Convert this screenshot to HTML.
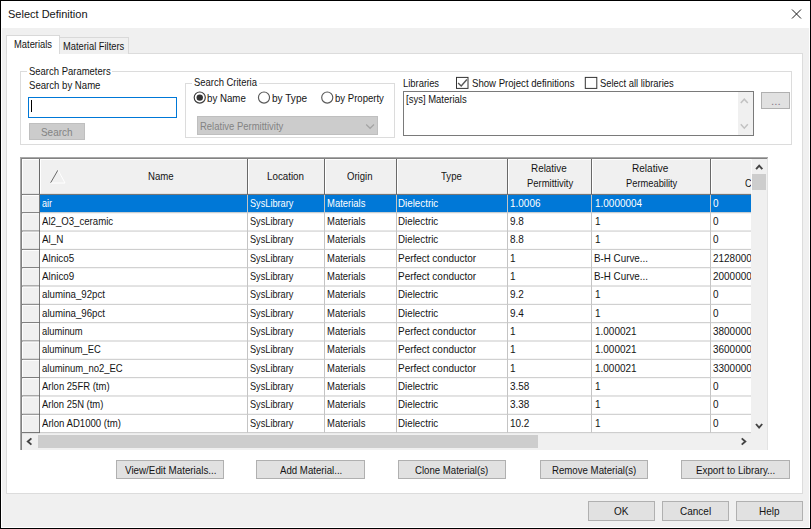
<!DOCTYPE html>
<html><head><meta charset="utf-8"><title>Select Definition</title>
<style>
html,body{margin:0;padding:0;background:#f0f0f0;}
body{width:811px;height:529px;position:relative;overflow:hidden;font-family:'Liberation Sans',sans-serif;font-size:11px;}
.b{position:absolute;box-sizing:border-box;}
.t{position:absolute;white-space:pre;transform-origin:0 0;display:block;line-height:14px;}
.btn{position:absolute;box-sizing:border-box;background:#e1e1e1;border:1px solid #b0b0b0;}
svg{position:absolute;left:0;top:0;overflow:visible;}
</style></head><body>

<div class="b" style="left:0px;top:0px;width:811px;height:529px;background:#f0f0f0;border:1px solid #000;"></div>
<div class="b" style="left:1px;top:1px;width:809px;height:527px;border:1px solid #fff;border-top:none;"></div>
<div class="b" style="left:1px;top:1px;width:809px;height:27px;background:#fff;"></div>
<div class="b" style="left:6px;top:53px;width:797px;height:441px;background:#fff;border:1px solid #dcdcdc;"></div>
<div class="b" style="left:60px;top:37px;width:69px;height:17px;background:#f0f0f0;border:1px solid #d9d9d9;border-bottom:none;border-left:none;"></div>
<div class="b" style="left:6px;top:35px;width:54px;height:19px;background:#fff;border:1px solid #d9d9d9;border-bottom:none;"></div>
<div class="b" style="left:20px;top:71px;width:772px;height:74px;border:1px solid #dcdcdc;"></div>
<div class="b" style="left:27px;top:66px;width:85px;height:12px;background:#fff;"></div>
<div class="b" style="left:28px;top:97px;width:149px;height:21px;background:#fff;border:1px solid #0078d7;"></div>
<div class="b" style="left:31px;top:100px;width:1px;height:12px;background:#000;"></div>
<div class="b" style="left:29px;top:123px;width:56px;height:17px;background:#cccccc;border:1px solid #bfbfbf;"></div>
<div class="b" style="left:185px;top:83px;width:210px;height:55px;border:1px solid #dcdcdc;"></div>
<div class="b" style="left:192px;top:77px;width:67px;height:12px;background:#fff;"></div>
<div class="b" style="left:197px;top:116px;width:181px;height:19px;background:#cccccc;border:1px solid #bfbfbf;"></div>
<div class="b" style="left:403px;top:91px;width:351px;height:45px;background:#fff;border:1px solid #7a7a7a;"></div>
<div class="b" style="left:738px;top:92px;width:15px;height:43px;background:#f0f0f0;"></div>
<div class="btn" style="left:761px;top:92px;width:29px;height:17px;"></div>
<div class="b" style="left:20px;top:157px;width:748px;height:293px;background:#fff;border-left:2px solid #828282;border-top:2px solid #828282;border-right:1px solid #e3e3e3;"></div>
<div class="b" style="left:20px;top:157px;width:748px;height:1px;background:#a8a8a8;"></div>
<div class="b" style="left:20px;top:157px;width:1px;height:293px;background:#a8a8a8;"></div>
<div class="b" style="left:22px;top:159px;width:729px;height:35px;background:#f0f0f0;"></div>
<div class="b" style="left:22px;top:159px;width:17px;height:274px;background:#f0f0f0;"></div>
<div class="b" style="left:751px;top:159px;width:16px;height:274px;background:#f0f0f0;"></div>
<div class="b" style="left:752px;top:174px;width:14px;height:16px;background:#cdcdcd;"></div>
<div class="b" style="left:751px;top:159px;width:1px;height:35px;background:#fafafa;"></div>
<div class="b" style="left:22px;top:433px;width:745px;height:17px;background:#f0f0f0;"></div>
<div class="b" style="left:38px;top:435px;width:500px;height:13px;background:#cdcdcd;"></div>
<svg width="811" height="529" viewBox="0 0 811 529"><rect x="40" y="194.90" width="711" height="17.32" fill="#0078d7"/></svg>
<div class="b" style="left:22px;top:159px;width:729px;height:1px;background:#fff;"></div>
<div class="b" style="left:22px;top:159px;width:1px;height:274px;background:#fff;"></div>
<div class="b" style="left:39px;top:159px;width:1px;height:35px;background:#696969;"></div>
<div class="b" style="left:40px;top:159px;width:1px;height:35px;background:#fff;"></div>
<div class="b" style="left:39px;top:195px;width:1px;height:238px;background:#7a7a7a;"></div>
<div class="b" style="left:247px;top:159px;width:1px;height:35px;background:#696969;"></div>
<div class="b" style="left:248px;top:159px;width:1px;height:35px;background:#fff;"></div>
<div class="b" style="left:247px;top:195px;width:1px;height:238px;background:#c4c4c4;"></div>
<div class="b" style="left:324px;top:159px;width:1px;height:35px;background:#696969;"></div>
<div class="b" style="left:325px;top:159px;width:1px;height:35px;background:#fff;"></div>
<div class="b" style="left:324px;top:195px;width:1px;height:238px;background:#c4c4c4;"></div>
<div class="b" style="left:396px;top:159px;width:1px;height:35px;background:#696969;"></div>
<div class="b" style="left:397px;top:159px;width:1px;height:35px;background:#fff;"></div>
<div class="b" style="left:396px;top:195px;width:1px;height:238px;background:#c4c4c4;"></div>
<div class="b" style="left:507px;top:159px;width:1px;height:35px;background:#696969;"></div>
<div class="b" style="left:508px;top:159px;width:1px;height:35px;background:#fff;"></div>
<div class="b" style="left:507px;top:195px;width:1px;height:238px;background:#c4c4c4;"></div>
<div class="b" style="left:591px;top:159px;width:1px;height:35px;background:#696969;"></div>
<div class="b" style="left:592px;top:159px;width:1px;height:35px;background:#fff;"></div>
<div class="b" style="left:591px;top:195px;width:1px;height:238px;background:#c4c4c4;"></div>
<div class="b" style="left:710px;top:159px;width:1px;height:35px;background:#696969;"></div>
<div class="b" style="left:711px;top:159px;width:1px;height:35px;background:#fff;"></div>
<div class="b" style="left:710px;top:195px;width:1px;height:238px;background:#c4c4c4;"></div>
<svg width="811" height="529" viewBox="0 0 811 529">
<rect x="22" y="193.90" width="729" height="1" fill="#696969"/>
<rect x="23" y="194.90" width="16" height="1" fill="#fff"/>
<rect x="22" y="212.22" width="18" height="1" fill="#696969"/>
<rect x="40" y="212.22" width="711" height="1" fill="#c8c8c8"/>
<rect x="23" y="213.22" width="16" height="1" fill="#fff"/>
<rect x="22" y="230.55" width="18" height="1" fill="#696969"/>
<rect x="40" y="230.55" width="711" height="1" fill="#c8c8c8"/>
<rect x="23" y="231.55" width="16" height="1" fill="#fff"/>
<rect x="22" y="248.88" width="18" height="1" fill="#696969"/>
<rect x="40" y="248.88" width="711" height="1" fill="#c8c8c8"/>
<rect x="23" y="249.88" width="16" height="1" fill="#fff"/>
<rect x="22" y="267.20" width="18" height="1" fill="#696969"/>
<rect x="40" y="267.20" width="711" height="1" fill="#c8c8c8"/>
<rect x="23" y="268.20" width="16" height="1" fill="#fff"/>
<rect x="22" y="285.52" width="18" height="1" fill="#696969"/>
<rect x="40" y="285.52" width="711" height="1" fill="#c8c8c8"/>
<rect x="23" y="286.52" width="16" height="1" fill="#fff"/>
<rect x="22" y="303.85" width="18" height="1" fill="#696969"/>
<rect x="40" y="303.85" width="711" height="1" fill="#c8c8c8"/>
<rect x="23" y="304.85" width="16" height="1" fill="#fff"/>
<rect x="22" y="322.18" width="18" height="1" fill="#696969"/>
<rect x="40" y="322.18" width="711" height="1" fill="#c8c8c8"/>
<rect x="23" y="323.18" width="16" height="1" fill="#fff"/>
<rect x="22" y="340.50" width="18" height="1" fill="#696969"/>
<rect x="40" y="340.50" width="711" height="1" fill="#c8c8c8"/>
<rect x="23" y="341.50" width="16" height="1" fill="#fff"/>
<rect x="22" y="358.82" width="18" height="1" fill="#696969"/>
<rect x="40" y="358.82" width="711" height="1" fill="#c8c8c8"/>
<rect x="23" y="359.82" width="16" height="1" fill="#fff"/>
<rect x="22" y="377.15" width="18" height="1" fill="#696969"/>
<rect x="40" y="377.15" width="711" height="1" fill="#c8c8c8"/>
<rect x="23" y="378.15" width="16" height="1" fill="#fff"/>
<rect x="22" y="395.48" width="18" height="1" fill="#696969"/>
<rect x="40" y="395.48" width="711" height="1" fill="#c8c8c8"/>
<rect x="23" y="396.48" width="16" height="1" fill="#fff"/>
<rect x="22" y="413.80" width="18" height="1" fill="#696969"/>
<rect x="40" y="413.80" width="711" height="1" fill="#c8c8c8"/>
<rect x="23" y="414.80" width="16" height="1" fill="#fff"/>
<rect x="22" y="432.12" width="18" height="1" fill="#696969"/>
<rect x="40" y="432.12" width="711" height="1" fill="#c8c8c8"/>
</svg>
<div class="btn" style="left:116px;top:460px;width:108px;height:19px;"></div>
<div class="btn" style="left:256px;top:460px;width:109px;height:19px;"></div>
<div class="btn" style="left:398px;top:460px;width:108px;height:19px;"></div>
<div class="btn" style="left:540px;top:460px;width:108px;height:19px;"></div>
<div class="btn" style="left:681px;top:460px;width:109px;height:19px;"></div>
<div class="btn" style="left:588px;top:501px;width:67px;height:20px;"></div>
<div class="btn" style="left:662px;top:501px;width:67px;height:20px;"></div>
<div class="btn" style="left:736px;top:501px;width:67px;height:20px;"></div>
<svg width="811" height="529" viewBox="0 0 811 529" fill="none">
<path d="M792 9.5 L801 18.5 M801 9.5 L792 18.5" stroke="#1a1a1a" stroke-width="1"/>
<path d="M50.5 183 L58 170" stroke="#696969" stroke-width="1"/>
<path d="M58 170 L65 183 L50.5 183" stroke="#fff" stroke-width="1"/>
<circle cx="199.75" cy="97.6" r="5.55" fill="#fff" stroke="#3c3c3c" stroke-width="1.15"/>
<circle cx="199.75" cy="97.6" r="3.2" fill="#333"/>
<circle cx="264.0" cy="97.6" r="5.55" fill="#fff" stroke="#5a5a5a" stroke-width="1.15"/>
<circle cx="327.25" cy="97.6" r="5.55" fill="#fff" stroke="#5a5a5a" stroke-width="1.15"/>
<rect x="456.5" y="77.4" width="11.5" height="11" fill="#fff" stroke="#333" stroke-width="1"/>
<path d="M458.1 83.1 L461.2 86 L466.9 79.5" stroke="#585858" stroke-width="1.4"/>
<rect x="585.3" y="77.4" width="11.5" height="11" fill="#fff" stroke="#333" stroke-width="1"/>
<path d="M366.2 124.5 L370.1 128.3 L374 124.5" stroke="#a4a4a4" stroke-width="1.2"/>
<path d="M740.8 103.1 L744.3 99.2 L747.8 103.1" stroke="#c2c2c2" stroke-width="1.5"/>
<path d="M740.8 124.3 L744.3 128.2 L747.8 124.3" stroke="#c2c2c2" stroke-width="1.5"/>
<path d="M756.1 169.2 L759.2 165.6 L762.3 169.2" stroke="#444" stroke-width="1.9"/>
<path d="M756 424 L759.1 427.6 L762.2 424" stroke="#444" stroke-width="1.9"/>
<path d="M31.4 438.4 L27.8 441.5 L31.4 444.6" stroke="#444" stroke-width="1.9"/>
<path d="M741.7 438.4 L745.3 441.5 L741.7 444.6" stroke="#444" stroke-width="1.9"/>
</svg>
<span class="t" style="left:8.07px;top:7px;font-size:11.5px;color:#141414;transform:scaleX(0.9572)">Select Definition</span>
<span class="t" style="left:14.03px;top:38px;font-size:10.4px;color:#141414;transform:scaleX(0.9029)">Materials</span>
<span class="t" style="left:63.03px;top:40px;font-size:10.4px;color:#141414;transform:scaleX(0.8988)">Material Filters</span>
<span class="t" style="left:28.79px;top:65px;font-size:10.4px;color:#141414;transform:scaleX(0.9123)">Search Parameters</span>
<span class="t" style="left:28.78px;top:79px;font-size:10.4px;color:#141414;transform:scaleX(0.9234)">Search by Name</span>
<span class="t" style="left:41.17px;top:126px;font-size:10.4px;color:#838383;transform:scaleX(0.9541)">Search</span>
<span class="t" style="left:193.89px;top:76px;font-size:10.4px;color:#141414;transform:scaleX(0.9076)">Search Criteria</span>
<span class="t" style="left:207.49px;top:92px;font-size:10.4px;color:#141414;transform:scaleX(0.9328)">by Name</span>
<span class="t" style="left:272.32px;top:92px;font-size:10.4px;color:#141414;transform:scaleX(0.9693)">by Type</span>
<span class="t" style="left:335.10px;top:92px;font-size:10.4px;color:#141414;transform:scaleX(0.9205)">by Property</span>
<span class="t" style="left:200.32px;top:120px;font-size:10.4px;color:#838383;transform:scaleX(0.9126)">Relative Permittivity</span>
<span class="t" style="left:403.03px;top:77px;font-size:10.4px;color:#141414;transform:scaleX(0.9050)">Libraries</span>
<span class="t" style="left:471.68px;top:77px;font-size:10.4px;color:#141414;transform:scaleX(0.9239)">Show Project definitions</span>
<span class="t" style="left:599.79px;top:77px;font-size:10.4px;color:#141414;transform:scaleX(0.9047)">Select all libraries</span>
<span class="t" style="left:405.81px;top:93px;font-size:10.4px;color:#141414;transform:scaleX(0.9136)">[sys] Materials</span>
<span class="t" style="left:770.74px;top:95px;font-size:10.4px;color:#887888;transform:scaleX(1.1194)">...</span>
<span class="t" style="left:147.61px;top:170px;font-size:10.4px;color:#141414;transform:scaleX(0.9263)">Name</span>
<span class="t" style="left:267.20px;top:170px;font-size:10.4px;color:#141414;transform:scaleX(0.9411)">Location</span>
<span class="t" style="left:346.88px;top:170px;font-size:10.4px;color:#141414;transform:scaleX(0.9194)">Origin</span>
<span class="t" style="left:441.47px;top:170px;font-size:10.4px;color:#141414;transform:scaleX(0.9243)">Type</span>
<span class="t" style="left:531.39px;top:162px;font-size:10.4px;color:#141414;transform:scaleX(0.9508)">Relative</span>
<span class="t" style="left:526.52px;top:177px;font-size:10.4px;color:#141414;transform:scaleX(0.9091)">Permittivity</span>
<span class="t" style="left:632.28px;top:162px;font-size:10.4px;color:#141414;transform:scaleX(0.9673)">Relative</span>
<span class="t" style="left:625.63px;top:177px;font-size:10.4px;color:#141414;transform:scaleX(0.8968)">Permeability</span>
<span class="t" style="left:124.65px;top:464px;font-size:10.4px;color:#141414;transform:scaleX(0.9456)">View/Edit Materials...</span>
<span class="t" style="left:279.85px;top:464px;font-size:10.4px;color:#141414;transform:scaleX(0.9295)">Add Material...</span>
<span class="t" style="left:415.49px;top:464px;font-size:10.4px;color:#141414;transform:scaleX(0.9256)">Clone Material(s)</span>
<span class="t" style="left:551.91px;top:464px;font-size:10.4px;color:#141414;transform:scaleX(0.9287)">Remove Material(s)</span>
<span class="t" style="left:695.70px;top:464px;font-size:10.4px;color:#141414;transform:scaleX(0.9418)">Export to Library...</span>
<span class="t" style="left:613.66px;top:505px;font-size:10.4px;color:#141414;transform:scaleX(0.9665)">OK</span>
<span class="t" style="left:679.57px;top:505px;font-size:10.4px;color:#141414;transform:scaleX(0.9628)">Cancel</span>
<span class="t" style="left:758.88px;top:505px;font-size:10.4px;color:#141414;transform:scaleX(0.9602)">Help</span>
<div class="b" style="left:40px;top:159px;width:711px;height:274px;overflow:hidden;"><span class="t" style="left:1.90px;top:38px;font-size:10.4px;color:#fff;transform:scaleX(0.8732)">air</span><span class="t" style="left:210.00px;top:38px;font-size:10.4px;color:#fff;transform:scaleX(0.8825)">SysLibrary</span><span class="t" style="left:286.72px;top:38px;font-size:10.4px;color:#fff;transform:scaleX(0.9102)">Materials</span><span class="t" style="left:358.40px;top:38px;font-size:10.4px;color:#fff;transform:scaleX(0.9410)">Dielectric</span><span class="t" style="left:470.00px;top:38px;font-size:10.4px;color:#fff;transform:scaleX(0.9581)">1.0006</span><span class="t" style="left:554.80px;top:38px;font-size:10.4px;color:#fff;transform:scaleX(0.9581)">1.0000004</span><span class="t" style="left:673.10px;top:38px;font-size:10.4px;color:#fff;transform:scaleX(0.9581)">0</span><span class="t" style="left:2.25px;top:56px;font-size:10.4px;color:#141414;transform:scaleX(0.9260)">Al2_O3_ceramic</span><span class="t" style="left:210.00px;top:56px;font-size:10.4px;color:#141414;transform:scaleX(0.8825)">SysLibrary</span><span class="t" style="left:286.72px;top:56px;font-size:10.4px;color:#141414;transform:scaleX(0.9102)">Materials</span><span class="t" style="left:358.40px;top:56px;font-size:10.4px;color:#141414;transform:scaleX(0.9410)">Dielectric</span><span class="t" style="left:470.00px;top:56px;font-size:10.4px;color:#141414;transform:scaleX(0.9581)">9.8</span><span class="t" style="left:554.80px;top:56px;font-size:10.4px;color:#141414;transform:scaleX(0.9581)">1</span><span class="t" style="left:673.10px;top:56px;font-size:10.4px;color:#141414;transform:scaleX(0.9581)">0</span><span class="t" style="left:2.25px;top:74px;font-size:10.4px;color:#141414;transform:scaleX(0.9525)">Al_N</span><span class="t" style="left:210.00px;top:74px;font-size:10.4px;color:#141414;transform:scaleX(0.8825)">SysLibrary</span><span class="t" style="left:286.72px;top:74px;font-size:10.4px;color:#141414;transform:scaleX(0.9102)">Materials</span><span class="t" style="left:358.40px;top:74px;font-size:10.4px;color:#141414;transform:scaleX(0.9410)">Dielectric</span><span class="t" style="left:470.00px;top:74px;font-size:10.4px;color:#141414;transform:scaleX(0.9581)">8.8</span><span class="t" style="left:554.80px;top:74px;font-size:10.4px;color:#141414;transform:scaleX(0.9581)">1</span><span class="t" style="left:673.10px;top:74px;font-size:10.4px;color:#141414;transform:scaleX(0.9581)">0</span><span class="t" style="left:2.25px;top:93px;font-size:10.4px;color:#141414;transform:scaleX(0.9429)">Alnico5</span><span class="t" style="left:210.00px;top:93px;font-size:10.4px;color:#141414;transform:scaleX(0.8825)">SysLibrary</span><span class="t" style="left:286.72px;top:93px;font-size:10.4px;color:#141414;transform:scaleX(0.9102)">Materials</span><span class="t" style="left:358.38px;top:93px;font-size:10.4px;color:#141414;transform:scaleX(0.9597)">Perfect conductor</span><span class="t" style="left:470.00px;top:93px;font-size:10.4px;color:#141414;transform:scaleX(0.9581)">1</span><span class="t" style="left:553.99px;top:93px;font-size:10.4px;color:#141414;transform:scaleX(0.9438)">B-H Curve...</span><span class="t" style="left:673.10px;top:93px;font-size:10.4px;color:#141414;transform:scaleX(0.9581)">2128000</span><span class="t" style="left:2.25px;top:111px;font-size:10.4px;color:#141414;transform:scaleX(0.9457)">Alnico9</span><span class="t" style="left:210.00px;top:111px;font-size:10.4px;color:#141414;transform:scaleX(0.8825)">SysLibrary</span><span class="t" style="left:286.72px;top:111px;font-size:10.4px;color:#141414;transform:scaleX(0.9102)">Materials</span><span class="t" style="left:358.38px;top:111px;font-size:10.4px;color:#141414;transform:scaleX(0.9597)">Perfect conductor</span><span class="t" style="left:470.00px;top:111px;font-size:10.4px;color:#141414;transform:scaleX(0.9581)">1</span><span class="t" style="left:553.99px;top:111px;font-size:10.4px;color:#141414;transform:scaleX(0.9438)">B-H Curve...</span><span class="t" style="left:673.10px;top:111px;font-size:10.4px;color:#141414;transform:scaleX(0.9581)">2000000</span><span class="t" style="left:1.88px;top:129px;font-size:10.4px;color:#141414;transform:scaleX(0.9323)">alumina_92pct</span><span class="t" style="left:210.00px;top:129px;font-size:10.4px;color:#141414;transform:scaleX(0.8825)">SysLibrary</span><span class="t" style="left:286.72px;top:129px;font-size:10.4px;color:#141414;transform:scaleX(0.9102)">Materials</span><span class="t" style="left:358.40px;top:129px;font-size:10.4px;color:#141414;transform:scaleX(0.9410)">Dielectric</span><span class="t" style="left:470.00px;top:129px;font-size:10.4px;color:#141414;transform:scaleX(0.9581)">9.2</span><span class="t" style="left:554.80px;top:129px;font-size:10.4px;color:#141414;transform:scaleX(0.9581)">1</span><span class="t" style="left:673.10px;top:129px;font-size:10.4px;color:#141414;transform:scaleX(0.9581)">0</span><span class="t" style="left:1.88px;top:148px;font-size:10.4px;color:#141414;transform:scaleX(0.9323)">alumina_96pct</span><span class="t" style="left:210.00px;top:148px;font-size:10.4px;color:#141414;transform:scaleX(0.8825)">SysLibrary</span><span class="t" style="left:286.72px;top:148px;font-size:10.4px;color:#141414;transform:scaleX(0.9102)">Materials</span><span class="t" style="left:358.40px;top:148px;font-size:10.4px;color:#141414;transform:scaleX(0.9410)">Dielectric</span><span class="t" style="left:470.00px;top:148px;font-size:10.4px;color:#141414;transform:scaleX(0.9581)">9.4</span><span class="t" style="left:554.80px;top:148px;font-size:10.4px;color:#141414;transform:scaleX(0.9581)">1</span><span class="t" style="left:673.10px;top:148px;font-size:10.4px;color:#141414;transform:scaleX(0.9581)">0</span><span class="t" style="left:1.89px;top:166px;font-size:10.4px;color:#141414;transform:scaleX(0.9019)">aluminum</span><span class="t" style="left:210.00px;top:166px;font-size:10.4px;color:#141414;transform:scaleX(0.8825)">SysLibrary</span><span class="t" style="left:286.72px;top:166px;font-size:10.4px;color:#141414;transform:scaleX(0.9102)">Materials</span><span class="t" style="left:358.38px;top:166px;font-size:10.4px;color:#141414;transform:scaleX(0.9597)">Perfect conductor</span><span class="t" style="left:470.00px;top:166px;font-size:10.4px;color:#141414;transform:scaleX(0.9581)">1</span><span class="t" style="left:554.80px;top:166px;font-size:10.4px;color:#141414;transform:scaleX(0.9581)">1.000021</span><span class="t" style="left:673.10px;top:166px;font-size:10.4px;color:#141414;transform:scaleX(0.9581)">3800000</span><span class="t" style="left:1.89px;top:184px;font-size:10.4px;color:#141414;transform:scaleX(0.9009)">aluminum_EC</span><span class="t" style="left:210.00px;top:184px;font-size:10.4px;color:#141414;transform:scaleX(0.8825)">SysLibrary</span><span class="t" style="left:286.72px;top:184px;font-size:10.4px;color:#141414;transform:scaleX(0.9102)">Materials</span><span class="t" style="left:358.38px;top:184px;font-size:10.4px;color:#141414;transform:scaleX(0.9597)">Perfect conductor</span><span class="t" style="left:470.00px;top:184px;font-size:10.4px;color:#141414;transform:scaleX(0.9581)">1</span><span class="t" style="left:554.80px;top:184px;font-size:10.4px;color:#141414;transform:scaleX(0.9581)">1.000021</span><span class="t" style="left:673.10px;top:184px;font-size:10.4px;color:#141414;transform:scaleX(0.9581)">3600000</span><span class="t" style="left:1.88px;top:203px;font-size:10.4px;color:#141414;transform:scaleX(0.9129)">aluminum_no2_EC</span><span class="t" style="left:210.00px;top:203px;font-size:10.4px;color:#141414;transform:scaleX(0.8825)">SysLibrary</span><span class="t" style="left:286.72px;top:203px;font-size:10.4px;color:#141414;transform:scaleX(0.9102)">Materials</span><span class="t" style="left:358.38px;top:203px;font-size:10.4px;color:#141414;transform:scaleX(0.9597)">Perfect conductor</span><span class="t" style="left:470.00px;top:203px;font-size:10.4px;color:#141414;transform:scaleX(0.9581)">1</span><span class="t" style="left:554.80px;top:203px;font-size:10.4px;color:#141414;transform:scaleX(0.9581)">1.000021</span><span class="t" style="left:673.10px;top:203px;font-size:10.4px;color:#141414;transform:scaleX(0.9581)">3300000</span><span class="t" style="left:2.25px;top:221px;font-size:10.4px;color:#141414;transform:scaleX(0.9141)">Arlon 25FR (tm)</span><span class="t" style="left:210.00px;top:221px;font-size:10.4px;color:#141414;transform:scaleX(0.8825)">SysLibrary</span><span class="t" style="left:286.72px;top:221px;font-size:10.4px;color:#141414;transform:scaleX(0.9102)">Materials</span><span class="t" style="left:358.40px;top:221px;font-size:10.4px;color:#141414;transform:scaleX(0.9410)">Dielectric</span><span class="t" style="left:470.00px;top:221px;font-size:10.4px;color:#141414;transform:scaleX(0.9581)">3.58</span><span class="t" style="left:554.80px;top:221px;font-size:10.4px;color:#141414;transform:scaleX(0.9581)">1</span><span class="t" style="left:673.10px;top:221px;font-size:10.4px;color:#141414;transform:scaleX(0.9581)">0</span><span class="t" style="left:2.25px;top:239px;font-size:10.4px;color:#141414;transform:scaleX(0.9083)">Arlon 25N (tm)</span><span class="t" style="left:210.00px;top:239px;font-size:10.4px;color:#141414;transform:scaleX(0.8825)">SysLibrary</span><span class="t" style="left:286.72px;top:239px;font-size:10.4px;color:#141414;transform:scaleX(0.9102)">Materials</span><span class="t" style="left:358.40px;top:239px;font-size:10.4px;color:#141414;transform:scaleX(0.9410)">Dielectric</span><span class="t" style="left:470.00px;top:239px;font-size:10.4px;color:#141414;transform:scaleX(0.9581)">3.38</span><span class="t" style="left:554.80px;top:239px;font-size:10.4px;color:#141414;transform:scaleX(0.9581)">1</span><span class="t" style="left:673.10px;top:239px;font-size:10.4px;color:#141414;transform:scaleX(0.9581)">0</span><span class="t" style="left:2.25px;top:258px;font-size:10.4px;color:#141414;transform:scaleX(0.9234)">Arlon AD1000 (tm)</span><span class="t" style="left:210.00px;top:258px;font-size:10.4px;color:#141414;transform:scaleX(0.8825)">SysLibrary</span><span class="t" style="left:286.72px;top:258px;font-size:10.4px;color:#141414;transform:scaleX(0.9102)">Materials</span><span class="t" style="left:358.40px;top:258px;font-size:10.4px;color:#141414;transform:scaleX(0.9410)">Dielectric</span><span class="t" style="left:470.00px;top:258px;font-size:10.4px;color:#141414;transform:scaleX(0.9581)">10.2</span><span class="t" style="left:554.80px;top:258px;font-size:10.4px;color:#141414;transform:scaleX(0.9581)">1</span><span class="t" style="left:673.10px;top:258px;font-size:10.4px;color:#141414;transform:scaleX(0.9581)">0</span><span class="t" style="left:722.00px;top:3px;font-size:10.4px;color:#141414;transform:scaleX(0.8780)">Bulk</span><span class="t" style="left:704.80px;top:18px;font-size:10.4px;color:#141414;transform:scaleX(0.8780)">Conductivity</span></div>
</body></html>
